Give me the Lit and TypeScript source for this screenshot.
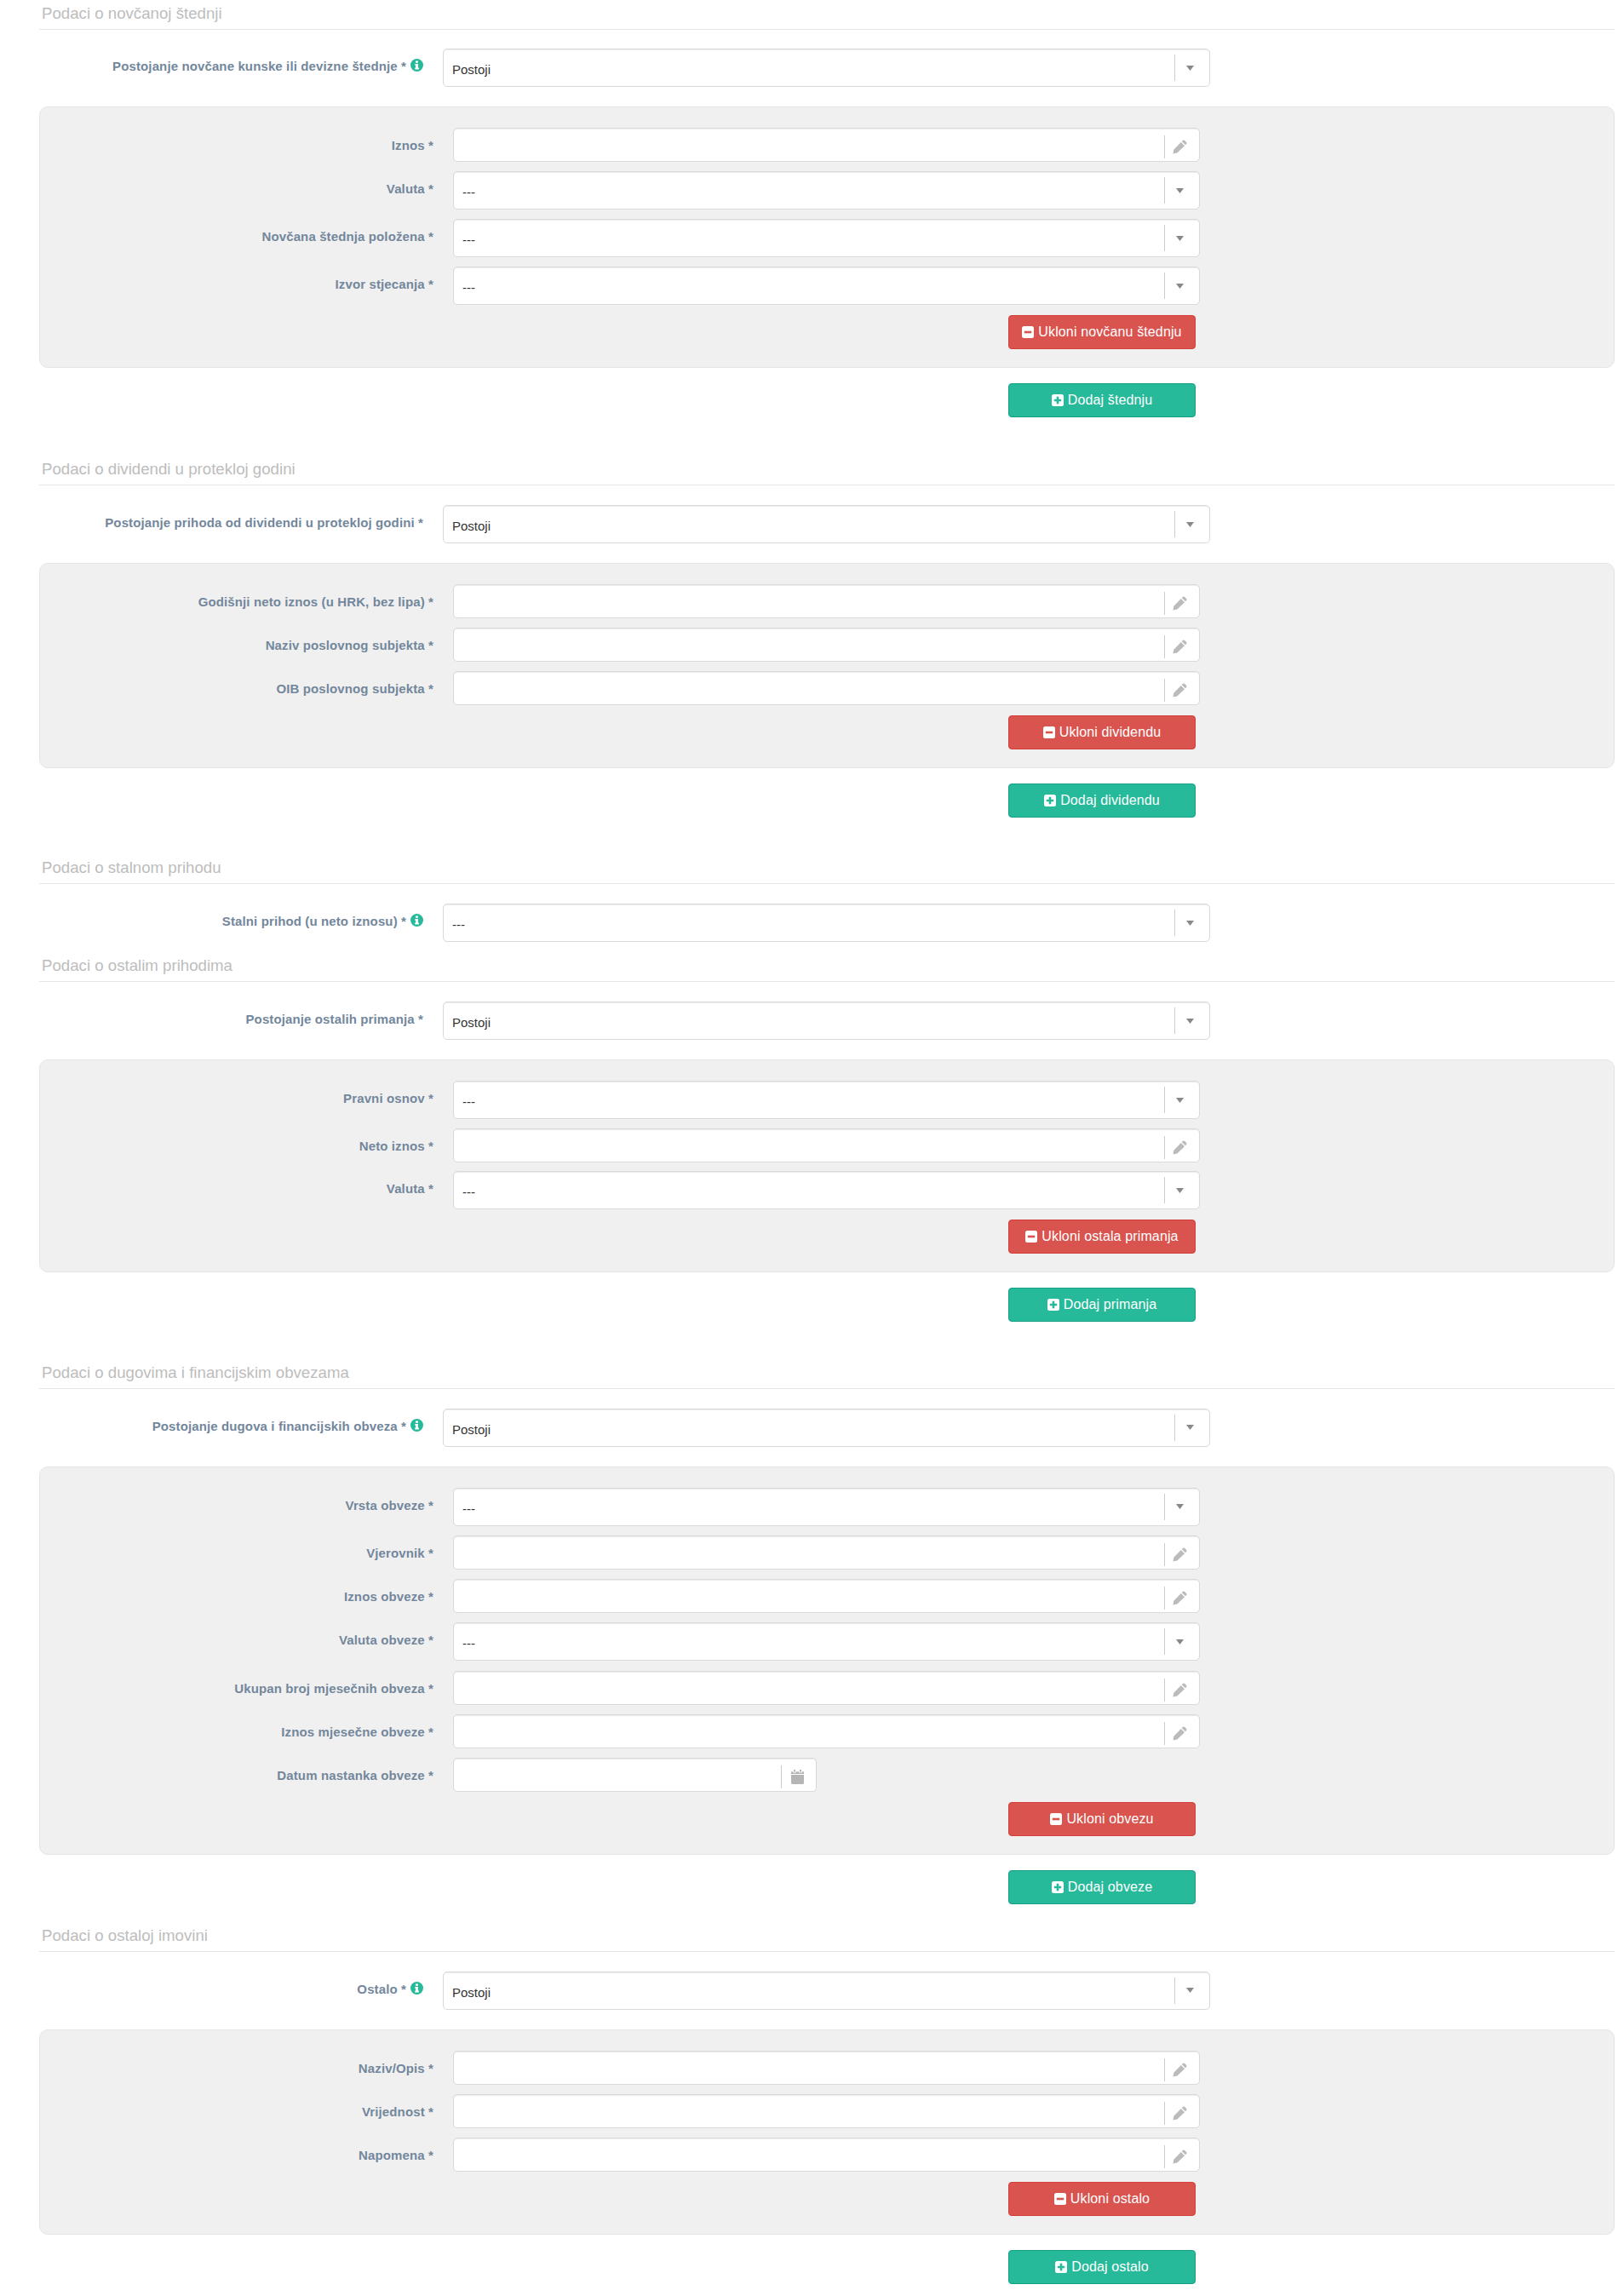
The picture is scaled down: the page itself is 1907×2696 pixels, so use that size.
import { LitElement, html, css, svg } from "lit"
import { customElement } from "lit/decorators.js"

type Field = { label: string; kind: "input" | "select" | "date"; value?: string }
type Section = {
  title: string
  variant: string
  label: string
  info?: boolean
  value: string
  fields?: Field[]
  remove?: string
  add?: string
}

const inp = (label: string): Field => ({ label, kind: "input" })
const sel = (label: string): Field => ({ label, kind: "select", value: "---" })

const SECTIONS: Section[] = [
  {
    title: "Podaci o novčanoj štednji",
    variant: "first",
    label: "Postojanje novčane kunske ili devizne štednje *",
    info: true,
    value: "Postoji",
    fields: [inp("Iznos *"), sel("Valuta *"), sel("Novčana štednja položena *"), sel("Izvor stjecanja *")],
    remove: "Ukloni novčanu štednju",
    add: "Dodaj štednju",
  },
  {
    title: "Podaci o dividendi u protekloj godini",
    variant: "second",
    label: "Postojanje prihoda od dividendi u protekloj godini *",
    value: "Postoji",
    fields: [inp("Godišnji neto iznos (u HRK, bez lipa) *"), inp("Naziv poslovnog subjekta *"), inp("OIB poslovnog subjekta *")],
    remove: "Ukloni dividendu",
    add: "Dodaj dividendu",
  },
  {
    title: "Podaci o stalnom prihodu",
    variant: "short",
    label: "Stalni prihod (u neto iznosu) *",
    info: true,
    value: "---",
  },
  {
    title: "Podaci o ostalim prihodima",
    variant: "tight",
    label: "Postojanje ostalih primanja *",
    value: "Postoji",
    fields: [sel("Pravni osnov *"), inp("Neto iznos *"), sel("Valuta *")],
    remove: "Ukloni ostala primanja",
    add: "Dodaj primanja",
  },
  {
    title: "Podaci o dugovima i financijskim obvezama",
    variant: "loose",
    label: "Postojanje dugova i financijskih obveza *",
    info: true,
    value: "Postoji",
    fields: [
      sel("Vrsta obveze *"),
      inp("Vjerovnik *"),
      inp("Iznos obveze *"),
      sel("Valuta obveze *"),
      inp("Ukupan broj mjesečnih obveza *"),
      inp("Iznos mjesečne obveze *"),
      { label: "Datum nastanka obveze *", kind: "date" },
    ],
    remove: "Ukloni obvezu",
    add: "Dodaj obveze",
  },
  {
    title: "Podaci o ostaloj imovini",
    variant: "last",
    label: "Ostalo *",
    info: true,
    value: "Postoji",
    fields: [inp("Naziv/Opis *"), inp("Vrijednost *"), inp("Napomena *")],
    remove: "Ukloni ostalo",
    add: "Dodaj ostalo",
  },
]

const caret = svg`<svg width="9" height="6" viewBox="0 0 9 6"><path d="M0 0h9L4.500 6z" fill="#888"/></svg>`

const pencil = svg`<svg class="lower" width="17" height="17" viewBox="0 0 17 17"><path d="M11.700 1.100a1.800 1.800 0 0 1 2.500 0l1.700 1.700a1.800 1.800 0 0 1 0 2.500l-1 1-4.200-4.200zM9.800 3l4.200 4.200-8.700 8.300-4.900 1.100.9-4.900z" fill="#bbb"/></svg>`

const calendar = svg`<svg class="lower" width="15" height="17" viewBox="0 0 15 17"><path d="M3 0h2v2.500H3zM10 0h2v2.500h-2zM0 2.200h2.200v1.300h3.600V2.200h3.400v1.300h3.600V2.200H15v2.800H0zM0 6h15v9.500a1.500 1.500 0 0 1-1.500 1.500h-12A1.500 1.500 0 0 1 0 15.500z" fill="#b5b5b5"/></svg>`

const info = svg`<svg class="info" width="15" height="15" viewBox="0 0 14 14"><circle cx="7" cy="7" r="7" fill="#26b99a"/><path d="M5.600 2.400h2.800v2.100H5.600zM5 5.600h3.400v4.300h.8v1.700H4.900V9.900h.8V7.300H5z" fill="#fff"/></svg>`

const squareIcon = (plus: boolean, color: string) => svg`<svg width="14" height="14" viewBox="0 0 14 14"><rect width="14" height="14" rx="2.500" fill="#fff"/>${
  plus
    ? svg`<path d="M5.700 2.800h2.600v2.900h2.900v2.600H8.300v2.900H5.700V8.300H2.800V5.700h2.900z" fill=${color}/>`
    : svg`<rect x="2.800" y="5.700" width="8.400" height="2.600" fill=${color}/>`
}</svg>`

@customElement("app-root")
export class AppRoot extends LitElement {
  static styles = css`
    :host {
      display: block;
      background: #fff;
      font-family: "Liberation Sans", Arial, sans-serif;
      padding: 0 11px 0 46px;
      box-sizing: border-box;
      width: 1907px;
    }
    * {
      box-sizing: border-box;
    }
    .legend {
      height: 35px;
      padding-left: 3px;
      font-size: 18.67px;
      line-height: 32px;
      color: #bdbdbd;
      border-bottom: 1px solid #e5e5e5;
    }
    .row {
      display: grid;
      align-items: start;
    }
    .top {
      grid-template-columns: 451px 901px;
      column-gap: 23px;
      margin-top: 23px;
    }
    .inner {
      grid-template-columns: 462px 877px;
      column-gap: 23px;
      margin-bottom: 11px;
    }
    .lab {
      margin: 0;
      padding-top: 12px;
      text-align: right;
      font-size: 15px;
      line-height: 18px;
      font-weight: 700;
      color: #73879c;
      letter-spacing: 0.12px;
    }
    .info {
      margin-left: 5px;
      vertical-align: -1px;
    }
    .box {
      display: flex;
      align-items: center;
      background: #fff;
      border: 1px solid #d9d9d9;
      border-radius: 5px;
      box-shadow: inset 0 1px 1px rgba(0, 0, 0, 0.08);
    }
    .input,
    .date {
      height: 40px;
    }
    .select {
      height: 45px;
    }
    .date {
      width: 427px;
    }
    .val {
      flex: 1;
      padding: 4px 0 0 10px;
      font-size: 15px;
      color: #333;
    }
    .sep {
      width: 1px;
      background: #ccc;
    }
    .input .sep,
    .date .sep {
      height: 27px;
      margin-top: 5px;
    }
    .select .sep {
      height: 31px;
    }
    .addon {
      width: 40px;
      padding-right: 5px;
      display: flex;
      justify-content: center;
      align-items: center;
    }
    .date .addon {
      padding-right: 3px;
    }
    .lower {
      margin-top: 5px;
    }
    .panel {
      margin-top: 23px;
      padding: 24px 0 21px;
      background: #f0f0f0;
      border: 1px solid #e5e5e5;
      border-radius: 10px;
    }
    .actions {
      display: flex;
      padding-left: 1138px;
    }
    .panel .actions {
      margin-top: 12px;
      padding-left: 1137px;
    }
    .add {
      margin-top: 18px;
    }
    .btn {
      display: flex;
      align-items: center;
      justify-content: center;
      gap: 5px;
      width: 220px;
      height: 40px;
      border-radius: 4px;
      font-size: 16px;
      letter-spacing: 0.13px;
      color: #fff;
    }
    .danger {
      background: #d9534f;
      border: 1px solid #d43f3a;
    }
    .success {
      background: #26b99a;
      border: 1px solid #169f85;
    }
    /* vertical rhythm differs slightly from one block to the next */
    .first {
      margin-bottom: 45px;
    }
    .first .top {
      margin-top: 22px;
    }
    .second {
      margin-bottom: 43px;
    }
    .short {
      margin-bottom: 12px;
    }
    .tight {
      margin-bottom: 43.5px;
    }
    .tight .inner {
      margin-bottom: 10.5px;
    }
    .loose {
      margin-bottom: 20.5px;
    }
    .loose .top {
      margin-top: 23px;
    }
    .loose .inner {
      margin-bottom: 11.3px;
    }
    .last {
      padding-bottom: 14px;
    }
  `

  private control(kind: string, value = "") {
    const icon = kind === "select" ? caret : kind === "date" ? calendar : pencil
    return html`<div class="box ${kind}">
      <div class="val">${value}</div>
      <div class="sep"></div>
      <div class="addon">${icon}</div>
    </div>`
  }

  private section(s: Section) {
    return html`<section class=${s.variant}>
      <div class="legend">${s.title}</div>
      <div class="row top">
        <label class="lab">${s.label}${s.info ? info : ""}</label>
        ${this.control("select", s.value)}
      </div>
      ${s.fields
        ? html`<div class="panel">
              ${s.fields.map(
                (f) => html`<div class="row inner">
                  <label class="lab">${f.label}</label>
                  <div>${this.control(f.kind, f.value)}</div>
                </div>`
              )}
              <div class="actions">
                <div class="btn danger">${squareIcon(false, "#d9534f")}<span>${s.remove}</span></div>
              </div>
            </div>
            <div class="actions add">
              <div class="btn success">${squareIcon(true, "#26b99a")}<span>${s.add}</span></div>
            </div>`
        : ""}
    </section>`
  }

  render() {
    return html`${SECTIONS.map((s) => this.section(s))}`
  }
}
